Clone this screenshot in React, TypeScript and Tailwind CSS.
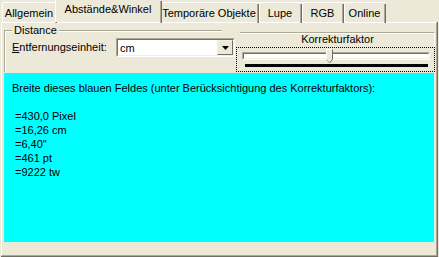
import React from "react";

const font = { fontFamily: '"Liberation Sans", Arial, sans-serif' };

function Tab({ label, w, active }: { label: string; w: number; active?: boolean }) {
  if (active) {
    return (
      <div
        className="relative z-20 -mx-[2px] flex h-[23px] items-start justify-center rounded-t-[2px] border-l border-t border-white bg-[#ECE9D8] pt-[3px]"
        style={{ width: w + 4 }}
      >
        <div className="absolute right-0 top-[1px] h-[22px] w-[2px] border-l border-[#ACA899] bg-[#716F64]" />
        <span className="pr-[2px]">{label}</span>
      </div>
    );
  }
  return (
    <div
      className="relative flex h-[20px] items-start justify-center rounded-t-[2px] border-l border-t border-white bg-[#ECE9D8] pt-[4px]"
      style={{ width: w }}
    >
      <div className="absolute right-0 top-[1px] h-[19px] w-[2px] border-l border-[#ACA899] bg-[#716F64]" />
      <span className="pr-[2px]">{label}</span>
    </div>
  );
}

export default function App() {
  return (
    <div className="relative h-[257px] w-[439px] overflow-hidden bg-[#ECE9D8] text-[11px] leading-[13px] text-black" style={font}>
      {/* Tab row */}
      <div className="relative z-10 flex h-[22px] items-end pl-[2px]">
        <Tab label="Allgemein" w={55} />
        <Tab label="Abstände&Winkel" w={103} active />
        <Tab label="Temporäre Objekte" w={99} />
        <Tab label="Lupe" w={43} />
        <Tab label="RGB" w={42} />
        <Tab label="Online" w={42} />
      </div>

      {/* Panel */}
      <div className="ml-[1px] h-[235px] w-[437px] border-b border-r border-[#716F64]">
        <div className="h-full w-full border-l border-t border-white border-b-[#ACA899] border-r-[#ACA899] border-b border-r">
          {/* Top controls */}
          <div className="flex h-[49px]">
            {/* Distance group */}
            <div className="w-[234px] pl-[2px] pt-[7px]">
              <div className="relative h-[42px] w-[218px] border-l border-t border-[#ACA899]">
                <div className="h-full w-full border-l border-t border-white">
                  <div className="absolute -top-[7px] left-[7px] bg-[#ECE9D8] px-[2px]">Distance</div>
                  <div className="flex w-[240px] items-center pl-[6px] pt-[6px]">
                    <div className="w-[104px]">
                      <span className="underline">E</span>ntfernungseinheit:
                    </div>
                    <div className="h-[19px] w-[119px] border-l border-t border-[#ACA899] border-b-white border-r-white border-b border-r">
                      <div className="flex h-full w-full border-l border-t border-[#716F64] border-b-[#F1EFE2] border-r-[#F1EFE2] border-b border-r bg-white">
                        <div className="flex-1 pl-[2px] pt-[2px]">cm</div>
                        <div className="flex h-[15px] w-[16px] items-center justify-center border-l border-t border-[#F1EFE2] border-b-[#716F64] border-r-[#716F64] border-b border-r bg-[#ECE9D8]">
                          <svg width="7" height="4" viewBox="0 0 7 4">
                            <path d="M0 0h7L3.5 4z" fill="#000" />
                          </svg>
                        </div>
                      </div>
                    </div>
                  </div>
                </div>
              </div>
            </div>

            {/* Korrekturfaktor */}
            <div className="flex w-[199px] flex-col pt-[9px]">
              <div className="ml-[4px] h-[15px] border-r border-t border-[#ACA899] border-r-white">
                <div className="h-full border-t border-white text-center leading-[13px]">
                  <span className="relative -top-[1px] pl-[1px]">Korrekturfaktor</span>
                </div>
              </div>
              <div className="relative h-[25px] w-[199px] border border-dotted border-black">
                <div className="ml-[5px] mt-[4px] h-[8px] w-[188px] border-l border-t border-[#ACA899] border-b-white border-r-white border-b border-r">
                  <div className="h-full w-full border-l border-t border-[#716F64] border-b-[#F1EFE2] border-r-[#F1EFE2] border-b border-r bg-white" />
                </div>
                <div className="ml-[8px] mt-[4px] h-[3px] w-[183px] bg-black" />
                <svg className="absolute left-[89px] top-[1px]" width="7" height="15" viewBox="0 0 7 15">
                  <path d="M0.5 0.5h6v10l-3 3.5l-3-3.5z" fill="#ECE9D8" />
                  <path d="M0.5 10.5v-10h5.5" stroke="#fff" fill="none" />
                  <path d="M6.5 0.5v10l-3 3.5" stroke="#716F64" fill="none" />
                  <path d="M0.5 10.5l3 3.5" stroke="#ACA899" fill="none" />
                </svg>
              </div>
            </div>
          </div>

          {/* Cyan area */}
          <div className="ml-[2px] mt-[1px] h-[169px] w-[430px] bg-[#00FFFF] pl-[8px] pt-[8px] leading-[14px]">
            <div>Breite dieses blauen Feldes (unter Berücksichtigung des Korrekturfaktors):</div>
            <div className="h-[14px]" />
            <div className="pl-[3px]">
              <div>=430,0 Pixel</div>
              <div>=16,26 cm</div>
              <div>=6,40"</div>
              <div>=461 pt</div>
              <div>=9222 tw</div>
            </div>
          </div>
        </div>
      </div>
    </div>
  );
}
